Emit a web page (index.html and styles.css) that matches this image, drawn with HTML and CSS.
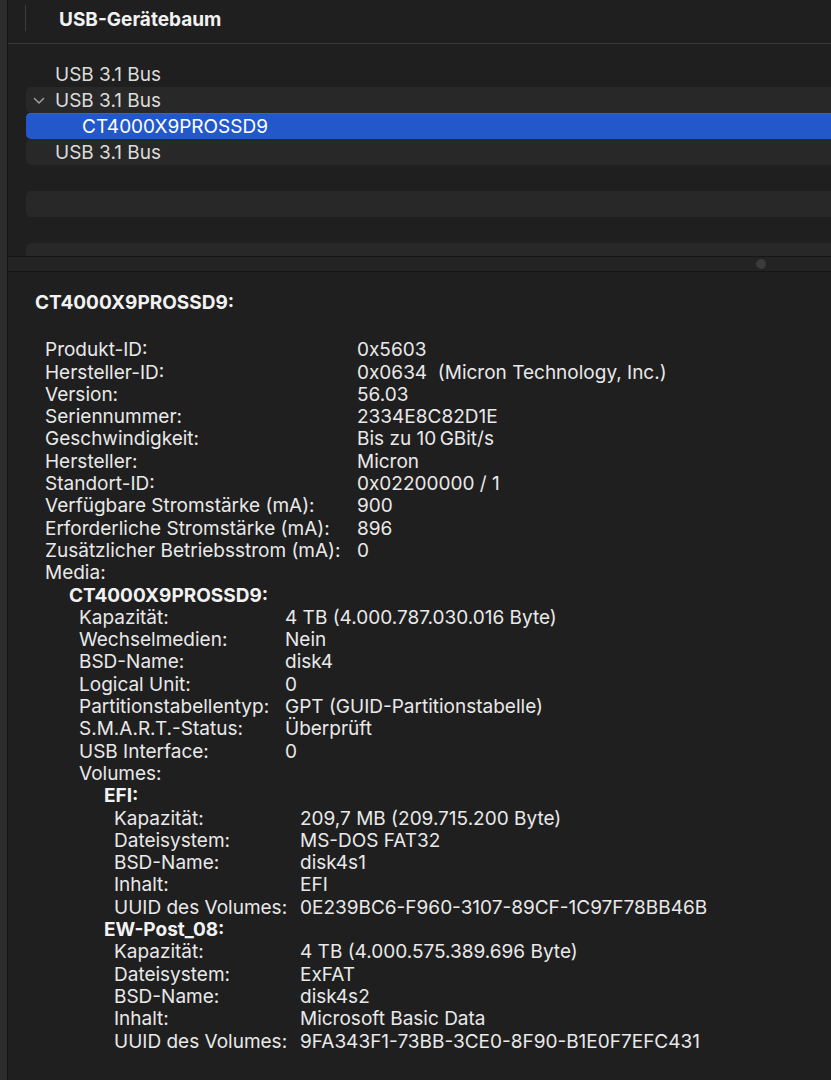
FILE: index.html
```html
<!DOCTYPE html>
<html lang="de">
<head>
    <meta charset="UTF-8">
    <meta name="viewport" content="width=device-width, initial-scale=1.0">
    <title>USB-Gerätebaum</title>
    <link rel="stylesheet" href="styles.css">
</head>
<body>
    <div class="window">
        <div class="edge"></div>

        <div class="main">
            <!-- Kopfzeile -->
            <header class="header">
                <span class="header-divider"></span>
                <h1>USB-Gerätebaum</h1>
            </header>

            <!-- Gerätebaum -->
            <ul class="tree">
                <li class="row">USB 3.1 Bus</li>
                <li class="row striped">
                    <svg class="chevron" width="12" height="8" viewBox="0 0 12 8">
                        <path d="M1.5 1.5 L6 6 L10.5 1.5" fill="none" stroke="#9a9a9a" stroke-width="1.6" stroke-linecap="round" stroke-linejoin="round"/>
                    </svg>
                    USB 3.1 Bus
                </li>
                <li class="row selected child">CT4000X9PROSSD9</li>
                <li class="row striped">USB 3.1 Bus</li>
                <li class="row"></li>
                <li class="row striped"></li>
                <li class="row"></li>
                <li class="row striped"></li>
            </ul>

            <!-- Trenner zwischen Baum und Details -->
            <div class="splitter">
                <span class="handle"></span>
            </div>

            <!-- Details -->
            <section class="details">
                <h2>CT4000X9PROSSD9:</h2>

                <div class="props level0">
                    <div class="prop"><span>Produkt-ID:</span><span>0x5603</span></div>
                    <div class="prop"><span>Hersteller-ID:</span><span>0x0634&nbsp; (Micron Technology, Inc.)</span></div>
                    <div class="prop"><span>Version:</span><span>56.03</span></div>
                    <div class="prop"><span>Seriennummer:</span><span>2334E8C82D1E</span></div>
                    <div class="prop"><span>Geschwindigkeit:</span><span>Bis zu 10&#8201;GBit/s</span></div>
                    <div class="prop"><span>Hersteller:</span><span>Micron</span></div>
                    <div class="prop"><span>Standort-ID:</span><span>0x02200000 / 1</span></div>
                    <div class="prop"><span>Verfügbare Stromstärke (mA):</span><span>900</span></div>
                    <div class="prop"><span>Erforderliche Stromstärke (mA):</span><span>896</span></div>
                    <div class="prop"><span>Zusätzlicher Betriebsstrom (mA):</span><span>0</span></div>
                    <div class="prop"><span>Media:</span><span></span></div>

                    <div class="group media">
                        <h3>CT4000X9PROSSD9:</h3>
                        <div class="props level1">
                            <div class="prop"><span>Kapazität:</span><span>4 TB (4.000.787.030.016 Byte)</span></div>
                            <div class="prop"><span>Wechselmedien:</span><span>Nein</span></div>
                            <div class="prop"><span>BSD-Name:</span><span>disk4</span></div>
                            <div class="prop"><span>Logical Unit:</span><span>0</span></div>
                            <div class="prop"><span>Partitionstabellentyp:</span><span>GPT (GUID-Partitionstabelle)</span></div>
                            <div class="prop"><span>S.M.A.R.T.-Status:</span><span>Überprüft</span></div>
                            <div class="prop"><span>USB Interface:</span><span>0</span></div>
                            <div class="prop"><span>Volumes:</span><span></span></div>

                            <div class="group volume">
                                <h3>EFI:</h3>
                                <div class="props level2">
                                    <div class="prop"><span>Kapazität:</span><span>209,7 MB (209.715.200 Byte)</span></div>
                                    <div class="prop"><span>Dateisystem:</span><span>MS-DOS FAT32</span></div>
                                    <div class="prop"><span>BSD-Name:</span><span>disk4s1</span></div>
                                    <div class="prop"><span>Inhalt:</span><span>EFI</span></div>
                                    <div class="prop"><span>UUID des Volumes:</span><span>0E239BC6-F960-3107-89CF-1C97F78BB46B</span></div>
                                </div>
                            </div>

                            <div class="group volume">
                                <h3>EW-Post_08:</h3>
                                <div class="props level2">
                                    <div class="prop"><span>Kapazität:</span><span>4 TB (4.000.575.389.696 Byte)</span></div>
                                    <div class="prop"><span>Dateisystem:</span><span>ExFAT</span></div>
                                    <div class="prop"><span>BSD-Name:</span><span>disk4s2</span></div>
                                    <div class="prop"><span>Inhalt:</span><span>Microsoft Basic Data</span></div>
                                    <div class="prop"><span>UUID des Volumes:</span><span>9FA343F1-73BB-3CE0-8F90-B1E0F7EFC431</span></div>
                                </div>
                            </div>
                        </div>
                    </div>
                </div>
            </section>
        </div>
    </div>
</body>
</html>
```

FILE: styles.css
```css
body {
    margin: 0;
    padding: 0;
    background-color: #1f1f1f;
    color: #e9e9e9;
    font-family: Inter, "Noto Sans", sans-serif;
    font-size: 19px;
}

.window {
    display: flex;
    min-height: 1080px;
    overflow: hidden;
}

.edge {
    width: 7px;
    flex-shrink: 0;
    background-color: #2c2c2c;
    border-right: 1px solid #141414;
}

.main {
    flex: 1;
    min-width: 0;
}

/* Kopfzeile */
.header {
    display: flex;
    align-items: center;
    height: 43px;
    border-bottom: 1px solid #393939;
    padding-left: 17px;
}

.header-divider {
    width: 1px;
    height: 26px;
    margin-top: -8px;
    background-color: #3c3c3c;
}

.header h1 {
    margin: -4px 0 0 33px;
    font-size: 19px;
    font-weight: 700;
    color: #f2f2f2;
}

/* Gerätebaum */
.tree {
    list-style: none;
    margin: 0;
    padding: 17px 0 0 18px;
    height: 195px;
    overflow: hidden;
}

.row {
    display: flex;
    align-items: center;
    height: 26px;
    padding-left: 29px;
    border-radius: 5px 0 0 5px;
    font-size: 19px;
    color: #dcdcdc;
    position: relative;
    white-space: nowrap;
}

.row.striped {
    background-color: #282828;
}

.row.selected {
    background-color: #2358ca;
    box-shadow: inset 0 1px 0 #3563c4;
    color: #ffffff;
}

.row.child {
    padding-left: 56px;
}

.chevron {
    position: absolute;
    left: 7px;
    top: 10px;
}

/* Trenner */
.splitter {
    height: 14px;
    background-color: #232323;
    border-top: 1px solid #161616;
    border-bottom: 1px solid #161616;
    position: relative;
}

.handle {
    position: absolute;
    left: 748px;
    top: 2px;
    width: 10px;
    height: 10px;
    border-radius: 50%;
    background-color: #3a3a3a;
}

/* Details */
.details {
    padding: 20px 0 0 27px;
    line-height: 22.3px;
}

.details h2 {
    margin: 0 0 25px 0;
    font-size: 19px;
    font-weight: 700;
    line-height: 22.3px;
    color: #f2f2f2;
}

.details h3 {
    margin: 0;
    font-size: 19px;
    font-weight: 700;
    line-height: 22.3px;
    color: #f2f2f2;
}

.props {
    padding-left: 10px;
}

.prop {
    display: grid;
    white-space: nowrap;
}

.level0 > .prop {
    grid-template-columns: 312px 1fr;
}

.level1 > .prop {
    grid-template-columns: 206px 1fr;
}

.level2 > .prop {
    grid-template-columns: 186px 1fr;
}

.group.media {
    padding-left: 24px;
}

.group.volume {
    padding-left: 25px;
}
```
